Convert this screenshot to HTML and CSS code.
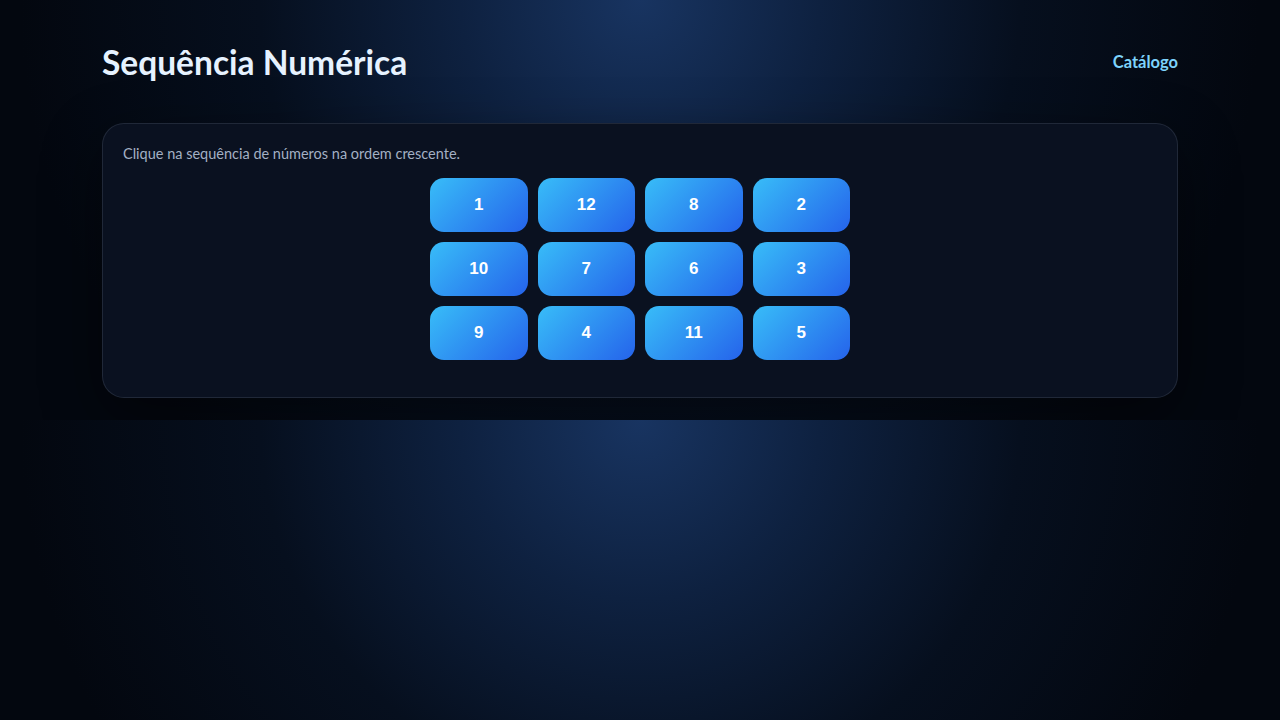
FILE: index.html
```html
<!DOCTYPE html>
<html lang="pt-BR">
<head>
<meta charset="utf-8">
<title>Sequência Numérica</title>
<link rel="stylesheet" href="styles.css">
</head>
<body>
<div class="wrap">
  <header class="top">
    <h1 class="title">Sequência Numérica</h1>
    <a class="nav" href="#">Catálogo</a>
  </header>
  <main class="card">
    <p class="hint">Clique na sequência de números na ordem crescente.</p>
    <div class="grid">
      <button class="tile">1</button>
      <button class="tile">12</button>
      <button class="tile">8</button>
      <button class="tile">2</button>
      <button class="tile">10</button>
      <button class="tile">7</button>
      <button class="tile">6</button>
      <button class="tile">3</button>
      <button class="tile">9</button>
      <button class="tile">4</button>
      <button class="tile">11</button>
      <button class="tile">5</button>
    </div>
  </main>
</div>
</body>
</html>
```
FILE: styles.css
```css
html {
  background: radial-gradient(circle at 50% 0%, #183461 0px, #0e2140 180px, #060f1e 380px, #03070f 620px);
}
body {
  margin: 0;
  font-family: Lato, "Noto Sans", sans-serif;
  color: #e2f1ff;
}
.wrap {
  max-width: 1076px;
  margin: 0 auto;
  padding: 38px 0 22px;
}
.top {
  display: flex;
  justify-content: space-between;
  align-items: center;
  height: 48px;
}
.title {
  margin: 0;
  font-size: 33.5px;
  font-weight: 700;
  color: #e6f2ff;
}
.nav {
  color: #7dd3fc;
  font-size: 16.5px;
  font-weight: 700;
  text-decoration: none;
}
.card {
  margin-top: 37px;
  background: #0a1120;
  border: 1px solid rgba(148, 163, 184, 0.16);
  border-radius: 22px;
  padding: 20px;
  box-shadow: 0 20px 60px rgba(0, 0, 0, 0.45);
}
.hint {
  margin: 0;
  font-size: 14.5px;
  line-height: 20px;
  color: #a3b0c4;
}
.grid {
  display: grid;
  grid-template-columns: repeat(4, 1fr);
  gap: 10px;
  max-width: 420px;
  margin: 14px auto 17px;
}
.tile {
  height: 54px;
  border: 0;
  border-radius: 14px;
  background: linear-gradient(135deg, #38bdf8, #2563eb);
  color: #fff;
  font-family: "Liberation Sans", Arial, sans-serif;
  font-size: 17px;
  font-weight: 700;
  cursor: pointer;
}
```
